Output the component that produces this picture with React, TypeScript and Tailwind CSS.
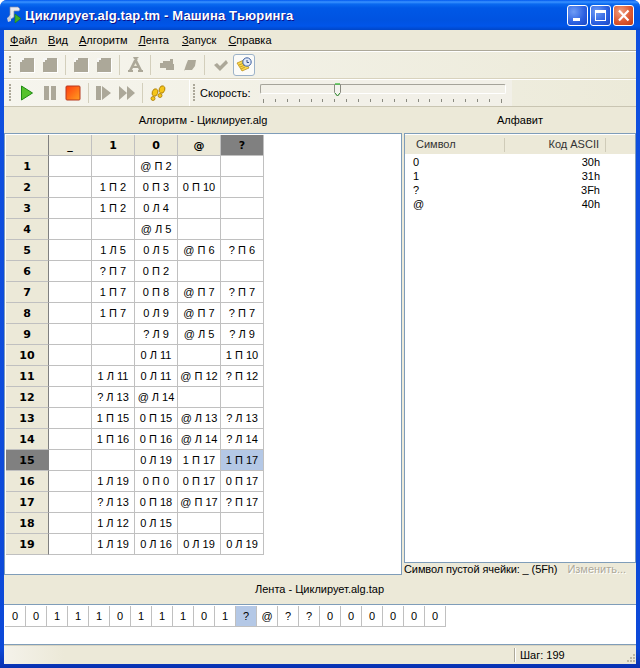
import React from 'react';

const rows: string[][] = [
  ['', '', '@ П 2', '', ''],
  ['', '1 П 2', '0 П 3', '0 П 10', ''],
  ['', '1 П 2', '0 Л 4', '', ''],
  ['', '', '@ Л 5', '', ''],
  ['', '1 Л 5', '0 Л 5', '@ П 6', '? П 6'],
  ['', '? П 7', '0 П 2', '', ''],
  ['', '1 П 7', '0 П 8', '@ П 7', '? П 7'],
  ['', '1 П 7', '0 Л 9', '@ П 7', '? П 7'],
  ['', '', '? Л 9', '@ Л 5', '? Л 9'],
  ['', '', '0 Л 11', '', '1 П 10'],
  ['', '1 Л 11', '0 Л 11', '@ П 12', '? П 12'],
  ['', '? Л 13', '@ Л 14', '', ''],
  ['', '1 П 15', '0 П 15', '@ Л 13', '? Л 13'],
  ['', '1 П 16', '0 П 16', '@ Л 14', '? Л 14'],
  ['', '', '0 Л 19', '1 П 17', '1 П 17'],
  ['', '1 Л 19', '0 П 0', '0 П 17', '0 П 17'],
  ['', '? Л 13', '0 П 18', '@ П 17', '? П 17'],
  ['', '1 Л 12', '0 Л 15', '', ''],
  ['', '1 Л 19', '0 Л 16', '0 Л 19', '0 Л 19'],
];
const heads = ['_', '1', '0', '@', '?'];
const tape = ['0','0','1','1','1','0','1','1','1','0','1','?','@','?','?','0','0','0','0','0','0'];
const alphabet = [['0','30h'],['1','31h'],['?','3Fh'],['@','40h']];
const G = '#aca899';

const Svg = ({ children, className = '' }: { children: React.ReactNode; className?: string }) => (
  <svg width="16" height="16" viewBox="0 0 16 16" className={'shrink-0 ' + className}>{children}</svg>
);
const Square = ({ className }: { className?: string }) => (
  <Svg className={className}>
    <path d="M2 2h14v14H2z" fill="#fff" />
    <path d="M1 1h14v14H1z" fill={G} />
    <path d="M1 1h4v2H3v2H1z" fill="#fff" opacity=".9" />
  </Svg>
);
const Grip = ({ className = '' }: { className?: string }) => (
  <div className={'w-[2px] h-[18px] shrink-0 bg-[repeating-linear-gradient(to_bottom,#aca899_0,#aca899_2px,transparent_2px,transparent_3px)] ' + className} />
);
const Sep = ({ className = '' }: { className?: string }) => (
  <div className={'w-px h-[20px] shrink-0 bg-[#d3cfbc] ' + className} />
);

function FlagIcon() {
  return (
    <svg width="18" height="18" viewBox="0 0 18 18" className="shrink-0">
      <path d="M5 1h8l2 2-1 2H9v6l-3 2-3-1 2-3z" fill="#e8e8f0" stroke="#7f8ba8" strokeWidth=".7" />
      <path d="M2 12l4-2v5l-3 1z" fill="#c9cfdc" />
      <path d="M10 8l6 4.5-6 4.5z" fill="#3fae2a" stroke="#1e7d14" strokeWidth=".6" />
    </svg>
  );
}

const WinBtn = ({ kind }: { kind: 'min' | 'max' | 'close' }) => (
  <div
    className={
      'w-[21px] h-[21px] rounded-[3px] border border-white flex items-center justify-center shrink-0 ' +
      (kind === 'close'
        ? 'bg-[radial-gradient(circle_at_35%_30%,#f0a080,#dd5a33_55%,#c03a14)]'
        : 'bg-[radial-gradient(circle_at_30%_30%,#6f9cf5,#2a5fe0_60%,#1c48c4)]')
    }
  >
    <svg width="15" height="15" viewBox="0 0 15 15">
      {kind === 'min' && <path d="M3 10h7v3H3z" fill="#fff" />}
      {kind === 'max' && <path d="M2 2h11v11H2zM3 5v7h9V5z" fill="#fff" fillRule="evenodd" />}
      {kind === 'close' && <path d="M3 2.500l9.500 10M12.500 2.500L3 12.500" stroke="#fff" strokeWidth="2.200" />}
    </svg>
  </div>
);

export default function App() {
  return (
    <div className="w-[640px] h-[668px] flex flex-col overflow-hidden rounded-t-[7px] bg-[linear-gradient(to_bottom,#0f50e0,#0c49d8_97%,#0831b0)] text-[11px] leading-[13px] text-black font-['Liberation_Sans',sans-serif]">
      {/* title bar */}
      <div className="h-[30px] shrink-0 flex items-center pl-[5px] pr-[6px] bg-[linear-gradient(to_bottom,#0058ee_0,#3a93ff_2px,#0a6af0_4px,#0058e6_8px,#0053e1_20px,#0055ea_26px,#0046c8_30px)]">
        <FlagIcon />
        <div className="ml-[2px] text-[13px] tracking-[0.14px] font-bold text-white [text-shadow:1px_1px_#0f1089] font-['Liberation_Sans',sans-serif]">
          Циклирует.alg.tap.tm - Машина Тьюринга
        </div>
        <div className="ml-auto flex gap-[2px]">
          <WinBtn kind="min" />
          <WinBtn kind="max" />
          <WinBtn kind="close" />
        </div>
      </div>

      <div className="flex-1 min-h-0 mx-[4px] mb-[4px] flex flex-col bg-[#ece9d8]">
        {/* menu */}
        <div className="h-[20px] shrink-0 flex items-center pl-[6px] gap-[11px]">
          <span><u>Ф</u>айл</span>
          <span><u>В</u>ид</span>
          <span><u>А</u>лгоритм</span>
          <span className="mr-[2px]"><u>Л</u>ента</span>
          <span className="mr-[1px]"><u>З</u>апуск</span>
          <span><u>С</u>правка</span>
        </div>

        {/* toolbar 1 */}
        <div className="h-[29px] shrink-0 flex items-center pl-[5px] border-t border-t-[#aca899] border-b border-b-[#d8d2bd] shadow-[inset_0_1px_#fff,0_1px_#fff] bg-[linear-gradient(to_right,#f6f5ee,#ecead9)]">
          <Grip />
          <Square className="ml-[8px]" />
          <Square className="ml-[7px]" />
          <Sep className="ml-[7px]" />
          <Square className="ml-[7px]" />
          <Square className="ml-[7px]" />
          <Sep className="ml-[7px]" />
          <Svg className="ml-[7px]">
            <path d="M6 0h6l-2 2 1 1H8l-1-1zM7 3h3l5 10h1v2h-5v-2h1l-1-2H6l-1 2h1v2H1v-2h1z" fill={G} />
            <path d="M7 9h3L8.500 6z" fill="#ece9d8" />
          </Svg>
          <Sep className="ml-[7px]" />
          <Svg className="ml-[8px]">
            <path d="M4 4h7V2h3v5h1v6H7v-2H1V6h3z" fill={G} />
          </Svg>
          <Svg className="ml-[7px]">
            <path d="M6 3h8l-1 6-3 4H3l-1 1 2-6z" fill={G} />
          </Svg>
          <Sep className="ml-[6px]" />
          <Svg className="ml-[8px]">
            <path d="M1 8l3-2 3 3 6-6 2 3-8 8z" fill={G} />
          </Svg>
          <div className="ml-[4px] w-[22px] h-[22px] shrink-0 rounded-[3px] border border-[#9db3c9] bg-[#fbfbf8] flex items-center justify-center">
            <Svg>
              <path d="M1 6l7-3 5 8-7 3z" fill="#f9d84e" stroke="#b8860b" strokeWidth=".7" />
              <path d="M3 8l5-2M4 10l5-2M5 12l4-2" stroke="#b8860b" strokeWidth=".7" />
              <circle cx="11" cy="5" r="4.200" fill="#dfe8f8" stroke="#3d5f9e" />
              <path d="M11 3v2.500h2" stroke="#24407a" strokeWidth=".9" fill="none" />
            </Svg>
          </div>
        </div>

        {/* toolbar 2 */}
        <div className="h-[28px] shrink-0 flex items-center pl-[5px] border-t border-t-white border-b border-b-[#c9c5b2] bg-[linear-gradient(to_right,#f6f5ee,#ecead9)]">
          <Grip />
          <Svg className="ml-[8px]">
            <path d="M2.500 1l11 7-11 7z" fill="#56c22c" stroke="#1f8a14" />
          </Svg>
          <Svg className="ml-[7px]">
            <path d="M2 1h5v14H2zM9 1h5v14H9z" fill={G} />
          </Svg>
          <Svg className="ml-[7px]">
            <defs>
              <linearGradient id="st" x1="0" y1="0" x2="1" y2="1">
                <stop offset="0" stopColor="#ff3c10" />
                <stop offset="1" stopColor="#ffa020" />
              </linearGradient>
            </defs>
            <rect x="1" y="1" width="14" height="14" rx="1" fill="url(#st)" stroke="#b83a20" />
          </Svg>
          <Sep className="ml-[7px]" />
          <Svg className="ml-[7px]">
            <path d="M0 1h5v14H0zM6 1l9 7-9 7z" fill={G} />
          </Svg>
          <Svg className="ml-[7px]">
            <path d="M0 1l8 7-8 7zM8 1l8 7-8 7z" fill={G} />
          </Svg>
          <Sep className="ml-[7px]" />
          <Svg className="ml-[7px]">
            <ellipse cx="5" cy="7.500" rx="2.800" ry="3.800" fill="#f5c518" stroke="#a87a05" strokeWidth=".8" transform="rotate(20 5 7.500)" />
            <ellipse cx="3" cy="13.500" rx="2" ry="2" fill="#f5c518" stroke="#a87a05" strokeWidth=".8" />
            <ellipse cx="12" cy="4.500" rx="2.800" ry="3.800" fill="#f5c518" stroke="#a87a05" strokeWidth=".8" transform="rotate(20 12 4.500)" />
            <ellipse cx="10" cy="10.500" rx="2" ry="2" fill="#f5c518" stroke="#a87a05" strokeWidth=".8" />
          </Svg>
          <div className="ml-[23px] w-px h-full bg-white shrink-0" />
          <Grip className="ml-[3px]" />
          <span className="ml-[5px] w-[59px] shrink-0">Скорость:</span>
          <div className="relative h-full w-[253px] shrink-0 bg-[#f2f0e8] pt-[4px] pl-[1px]">
            <div className="h-[10px] w-[246px] rounded-[2px] border border-[#a5a39a] border-r-white border-b-white" />
            <div className="mt-[5px] ml-[3px] w-[239px] flex justify-between items-start">
              {Array.from({ length: 21 }).map((_, i) => (
                <div key={i} className={'w-px bg-[#8a8a80] ' + (i % 20 === 0 ? 'h-[4px]' : 'h-[3px]')} />
              ))}
            </div>
            <svg width="7" height="14" viewBox="0 0 7 14" className="absolute left-[75px] top-[3px]">
              <path d="M.5 1.500h6v8l-3 3.500-3-3.500z" fill="#f4f3ee" stroke="#8a8a80" />
              <path d="M1 1h5" stroke="#4fc24f" strokeWidth="1.500" />
              <path d="M1 10l2.500 3L6 10" stroke="#3a9a3a" fill="none" />
            </svg>
          </div>
        </div>

        {/* panels */}
        <div className="flex-1 min-h-0 flex flex-col">
          <div className="h-[26px] shrink-0 flex items-center">
            <div className="w-[398px] text-center">Алгоритм - Циклирует.alg</div>
            <div className="ml-[2px] w-[232px] text-center">Алфавит</div>
          </div>
          <div className="h-[442px] shrink-0 flex">
            <div className="w-[398px] shrink-0 bg-white border border-[#7f9db9] pl-px pt-px">
              <div className="grid grid-cols-[repeat(6,43px)] auto-rows-[21px] text-black">
                <div className="bg-[#ece9d8] border-r border-b border-r-[#808080] border-b-[#c0c0c0]" />
                {heads.map((h, i) => (
                  <div
                    key={i}
                    className={
                      "flex items-center justify-center border-r border-b border-[#c0c0c0] font-bold text-[11px] font-['DejaVu_Sans',sans-serif] text-black " +
                      (i === 4 ? 'bg-[#808080]' : 'bg-[#ece9d8]')
                    }
                  >
                    {h}
                  </div>
                ))}
                {rows.map((r, y) => (
                  <React.Fragment key={y}>
                    <div
                      className={
                        "flex items-center justify-center border-r border-b border-r-[#808080] border-b-[#c0c0c0] font-bold text-[11px] font-['DejaVu_Sans',sans-serif] text-black " +
                        (y === 14 ? 'bg-[#808080]' : 'bg-[#ece9d8]')
                      }
                    >
                      {y + 1}
                    </div>
                    {r.map((c, x) => (
                      <div
                        key={x}
                        className={
                          'flex items-center justify-center border-r border-b border-[#c0c0c0] whitespace-nowrap ' +
                          (y === 14 && x === 4 ? 'bg-[#b4c8e6]' : '')
                        }
                      >
                        {c}
                      </div>
                    ))}
                  </React.Fragment>
                ))}
              </div>
            </div>
            <div className="ml-[2px] w-[232px] shrink-0 flex flex-col">
              <div className="h-[430px] shrink-0 bg-white border border-[#7f9db9] pt-px">
                <div className="h-[19px] bg-[#ece9d8] flex items-center text-[#333]">
                  <div className="w-[100px] pl-[11px] border-r border-[#cfcbb8] h-[14px]">Символ</div>
                  <div className="w-[101px] pr-[6px] text-right border-r border-[#cfcbb8] h-[14px]">Код ASCII</div>
                </div>
                <div className="pt-px">
                  {alphabet.map(([s, c]) => (
                    <div key={s} className="h-[14px] flex items-center">
                      <span className="ml-[8px]">{s}</span>
                      <span className="ml-auto mr-[35px]">{c}</span>
                    </div>
                  ))}
                </div>
              </div>
              <div className="flex-1 flex items-center pb-[1px]">
                <span className="tracking-[-0.1px]">Символ пустой ячейки: _ (5Fh)</span>
                <span className="ml-[10px] text-[#aca899] [text-shadow:1px_1px_#fff]">Изменить...</span>
              </div>
            </div>
          </div>
          <div className="h-[29px] shrink-0 flex items-center justify-center pr-[1px]">Лента - Циклирует.alg.tap</div>
          <div className="h-[41px] shrink-0 bg-white border-y border-[#7f9db9] pt-px pl-px flex items-start">
            {tape.map((t, i) => (
              <div
                key={i}
                className={
                  'w-[21px] h-[21px] shrink-0 flex items-center justify-center border-r border-b border-[#c0c0c0] ' +
                  (i === 11 ? 'bg-[#b4c8e6]' : '')
                }
              >
                {t}
              </div>
            ))}
          </div>
          {/* status bar */}
          <div className="flex-1 min-h-0 flex items-center relative bg-[linear-gradient(to_right,#f4f2ea,#ece9d8_60px)] border-t border-t-[#d8d4c2]">
            <div className="ml-[510px] w-px h-[14px] bg-[#aca899] shadow-[1px_0_#fff]" />
            <span className="ml-[5px]">Шаг: 199</span>
            <svg width="12" height="12" viewBox="0 0 12 12" className="absolute right-0 bottom-0">
              <path d="M9 2h2v2H9zM6 5h2v2H6zM9 5h2v2H9zM3 8h2v2H3zM6 8h2v2H6zM9 8h2v2H9z" fill="#bdb9a5" />
            </svg>
          </div>
        </div>
      </div>
    </div>
  );
}
